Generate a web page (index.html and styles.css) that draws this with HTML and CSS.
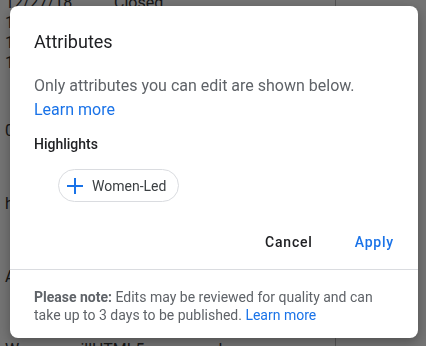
FILE: index.html
```html
<!DOCTYPE html>
<html lang="en">
<head>
  <meta charset="UTF-8">
  <meta name="viewport" content="width=device-width, initial-scale=1.0">
  <title>Attributes</title>
  <link rel="stylesheet" href="styles.css">
</head>
<body>

  <div class="page">
    <div class="table">
      <div class="row"><span class="date">12/27/18</span><span class="status">Closed</span></div>
      <div class="row"><span class="date">12/26/18</span><span class="status">Closed</span></div>
      <div class="row"><span class="date">12/25/18</span><span class="status">Closed</span></div>
      <div class="row"><span class="date">12/24/18</span><span class="status">Closed</span></div>
      <div class="row gap1">09:00 – 17:00</div>
      <div class="row gap2">https://example.com</div>
      <div class="row gap3">Add attribute</div>
      <div class="row gap4">We use rmillHTML5 pages and apps</div>
    </div>
  </div>

  <div class="overlay">
    <div class="dialog">
      <div class="dialog-body">
        <h2 class="title">Attributes</h2>
        <p class="intro">Only attributes you can edit are shown below.<br><a href="#" class="link">Learn more</a></p>
        <h3 class="section">Highlights</h3>
        <div class="chips">
          <button class="chip">
            <svg class="chip-icon" width="18" height="18" viewBox="0 0 18 18">
              <path d="M9 1v16M1 9h16" stroke="#1a73e8" stroke-width="2" fill="none"/>
            </svg>
            Women-Led
          </button>
        </div>
      </div>
      <div class="actions">
        <button class="btn">Cancel</button>
        <button class="btn btn-primary">Apply</button>
      </div>
      <div class="note">
        <b>Please note:</b> Edits may be reviewed for quality and can take up to 3 days to be published. <a href="#" class="link">Learn more</a>
      </div>
    </div>
  </div>

</body>
</html>
```

FILE: styles.css
```css
body {
  margin: 0;
  width: 426px;
  height: 346px;
  overflow: hidden;
  font-family: Roboto, "Liberation Sans", sans-serif;
  background-color: #fff;
}
.page {
  color: #333;
  font-size: 16px;
  line-height: 20px;
}
.table {
  width: 336px;
  border-right: 1px solid #bbb;
  margin-top: -7px;
  padding-left: 5px;
  box-sizing: border-box;
  height: 360px;
}
.row {
  white-space: nowrap;
}
.date {
  display: inline-block;
  width: 109px;
}
.gap1 { margin-top: 48px; }
.gap2 { margin-top: 53px; }
.gap3 { margin-top: 53px; }
.gap4 { margin-top: 53px; }

.overlay {
  position: fixed;
  inset: 0;
  background-color: rgba(0, 0, 0, 0.55);
  padding: 6px 8px 8px 10px;
}
.dialog {
  width: 408px;
  height: 332px;
  background-color: #fff;
  border-radius: 8px;
  box-shadow: 0 4px 12px rgba(0, 0, 0, 0.3);
  display: flex;
  flex-direction: column;
  box-sizing: border-box;
}
.dialog-body {
  padding: 24px 24px 0;
}
.title {
  margin: 0;
  font-size: 18px;
  font-weight: 400;
  line-height: 24px;
  color: #202124;
}
.intro {
  margin: 20px 0 0;
  font-size: 16px;
  line-height: 24px;
  color: #5f6368;
}
.link {
  color: #1a73e8;
  text-decoration: none;
}
.section {
  margin: 12px 0 0;
  font-size: 14px;
  font-weight: 500;
  line-height: 20px;
  color: #202124;
}
.chips {
  margin-top: 15px;
  padding-left: 24px;
}
.chip {
  display: inline-flex;
  align-items: center;
  gap: 8px;
  height: 33px;
  padding: 0 12px 0 7px;
  border: 1px solid #dadce0;
  border-radius: 17px;
  background: #fff;
  font-family: inherit;
  font-size: 14px;
  color: #3c4043;
}
.actions {
  display: flex;
  justify-content: flex-end;
  gap: 10px;
  padding: 22px 8px 9px;
  border-bottom: 1px solid #dadce0;
}
.btn {
  height: 36px;
  padding: 0 16px;
  border: none;
  background: none;
  font-family: inherit;
  font-size: 14px;
  font-weight: 500;
  letter-spacing: 0.8px;
  color: #202124;
}
.btn-primary {
  color: #1a73e8;
}
.note {
  padding: 18px 24px 0;
  font-size: 14px;
  line-height: 18px;
  color: #5f6368;
}
.note b {
  font-weight: 700;
}
```
